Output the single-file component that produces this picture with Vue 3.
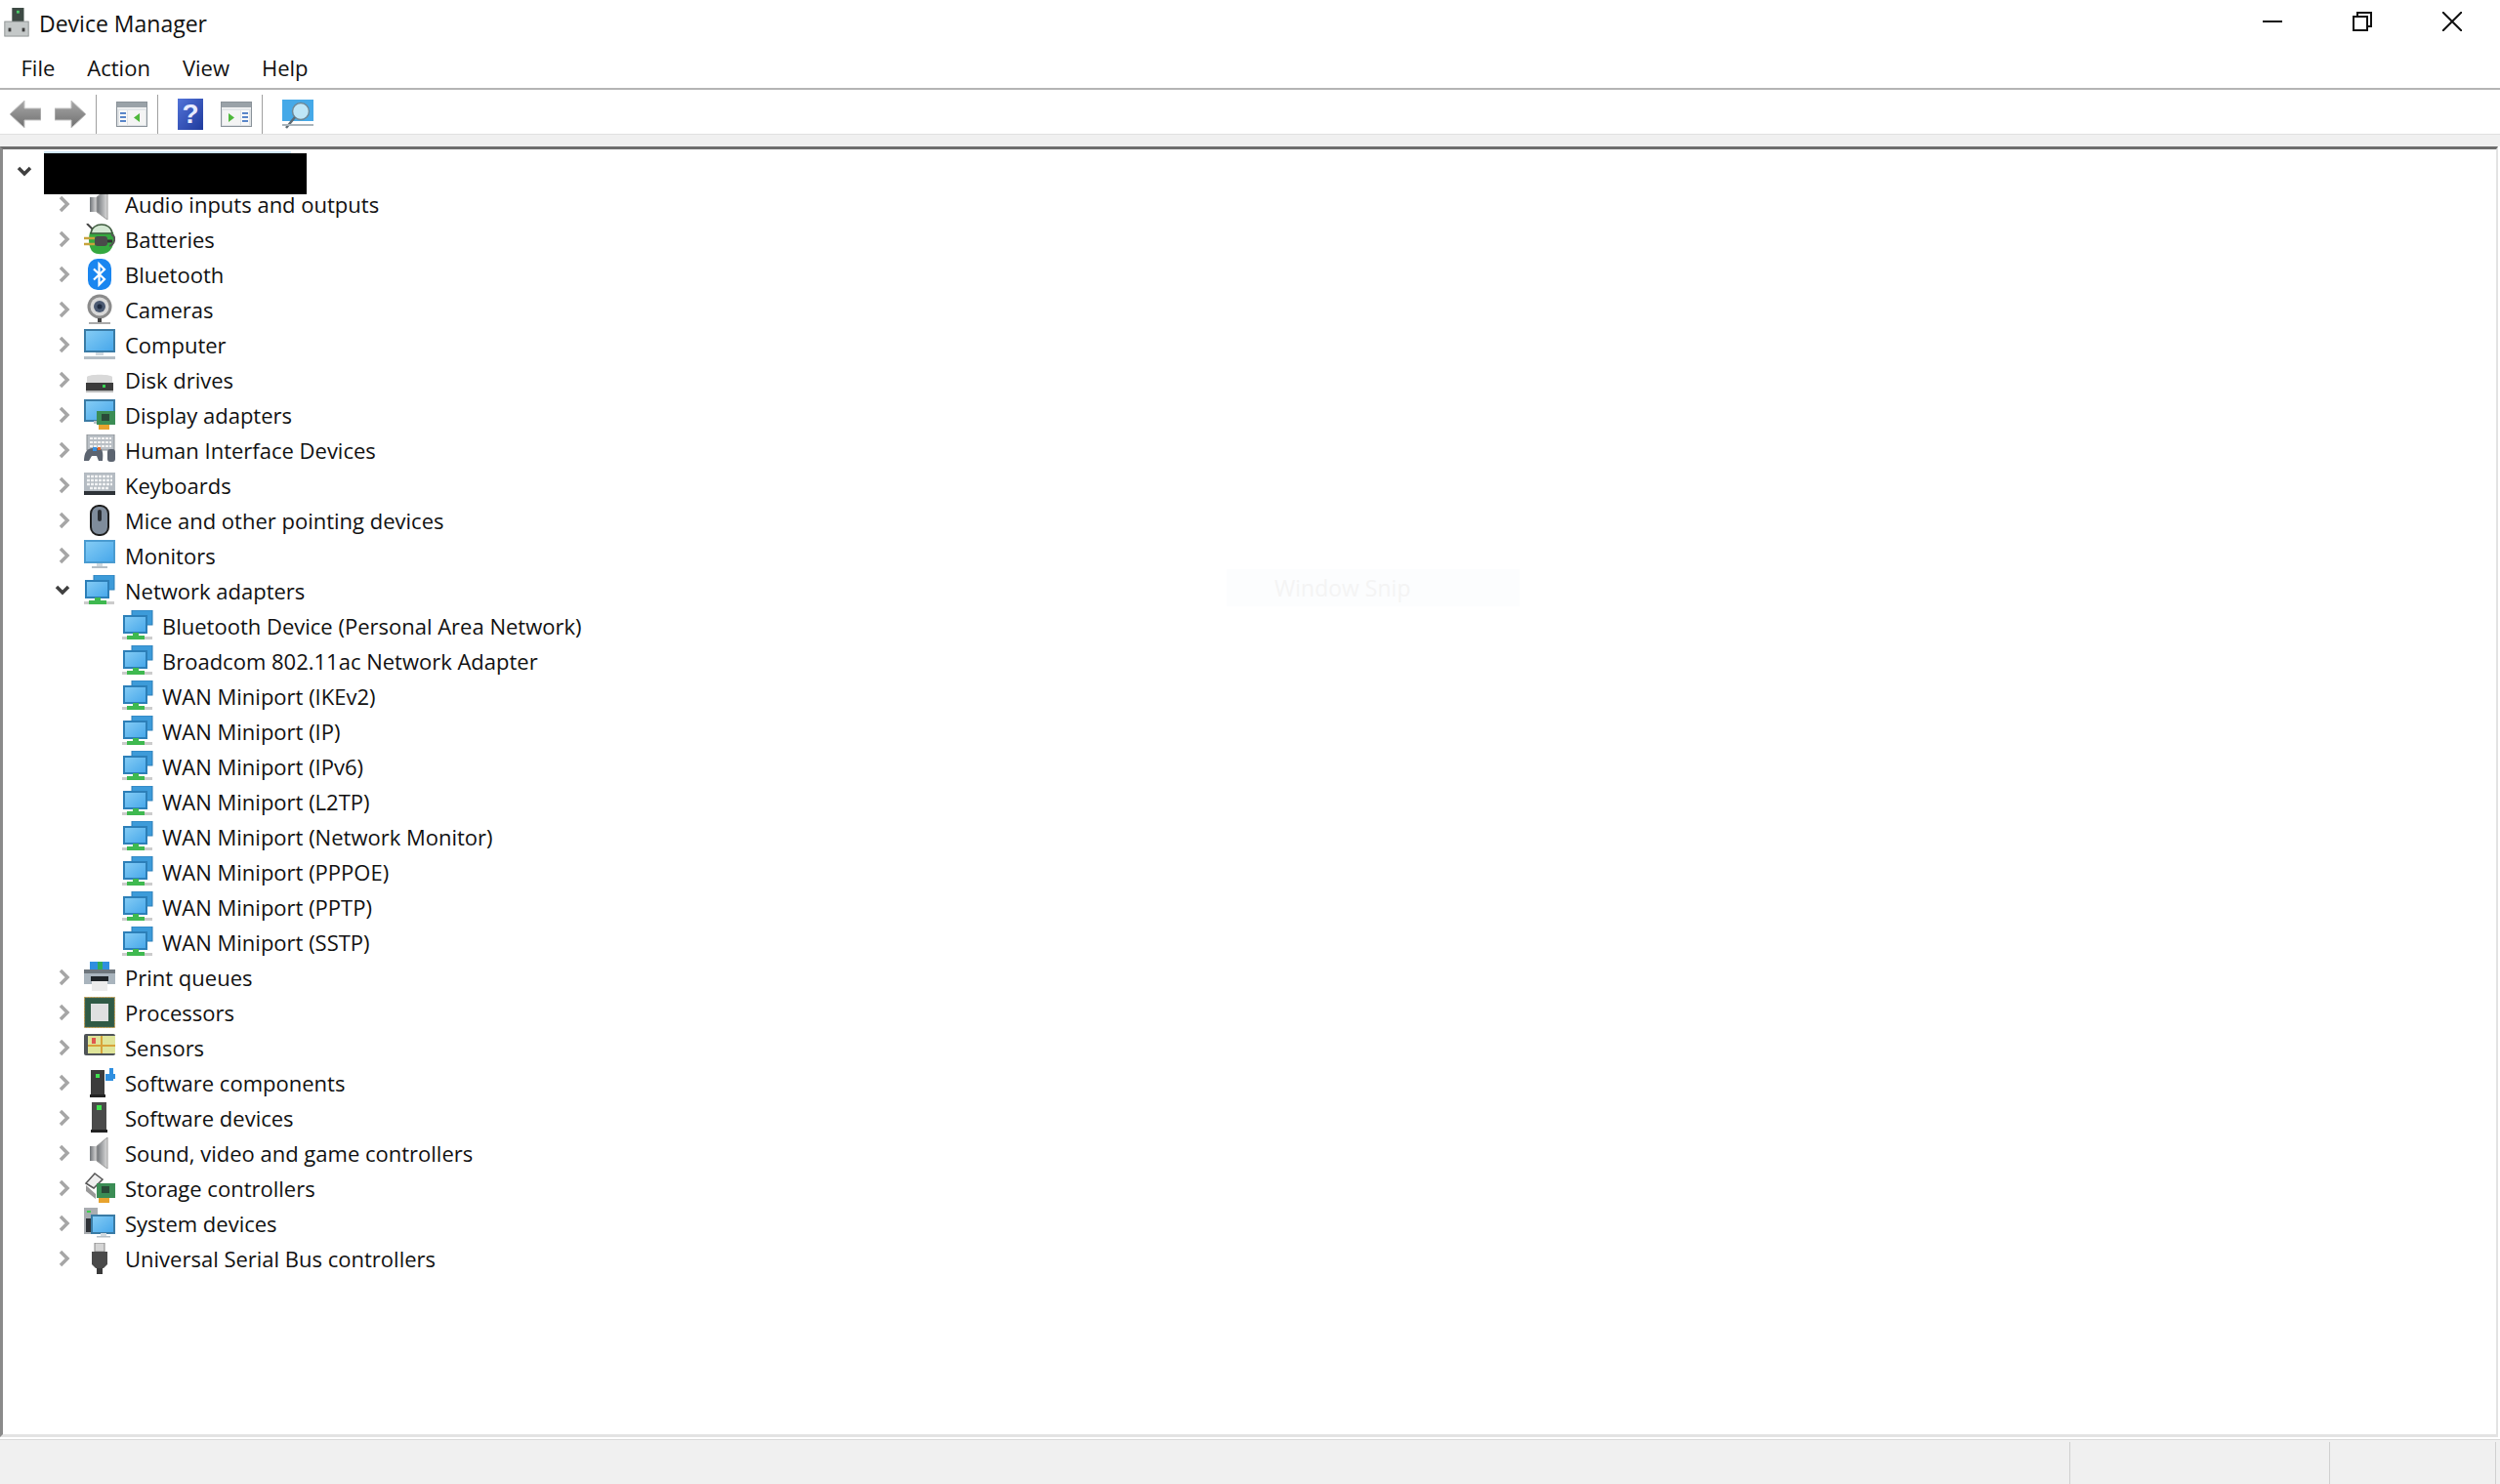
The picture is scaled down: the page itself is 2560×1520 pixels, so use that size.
<template>
  <div class="device-manager">
    <svg class="defs" width="0" height="0">
      <defs>
        <linearGradient id="screen" x1="0" y1="0" x2="1" y2="1">
          <stop offset="0" stop-color="#86cdf5" />
          <stop offset="1" stop-color="#45a6ea" />
        </linearGradient>
        <linearGradient id="steel" x1="0" y1="0" x2="1" y2="0">
          <stop offset="0" stop-color="#6f7377" />
          <stop offset="1" stop-color="#dcdcdc" />
        </linearGradient>
        <linearGradient id="arrow" x1="0" y1="0" x2="0" y2="1">
          <stop offset="0" stop-color="#a8a8a8" />
          <stop offset="1" stop-color="#6f6f6f" />
        </linearGradient>
        <linearGradient id="helpblue" x1="0" y1="0" x2="1" y2="1">
          <stop offset="0" stop-color="#5273d8" />
          <stop offset="1" stop-color="#1f3a9c" />
        </linearGradient>

        <symbol id="audio" viewBox="0 0 32 32">
          <rect x="6" y="9" width="7" height="15" fill="url(#steel)" />
          <path d="M13 9 24 0v32L13 24z" fill="url(#steel)" stroke="#9a9a9a" />
        </symbol>
        <symbol id="batteries" viewBox="0 0 32 32">
          <path d="M3 0l7 7" stroke="#444" stroke-width="2" fill="none" />
          <path d="M6 9h24c2 8 0 16-5 20-5 3-12 3-16 0-4-4-5-13-3-20z" fill="#35a83f" />
          <path d="M7 10c1-12 21-12 22 0z" fill="#d3e8d3" stroke="#3d5a3d" stroke-width="1.500" />
          <path d="M28 11c5 2 4 10-2 12" stroke="#555" stroke-width="2" fill="none" />
          <rect x="11" y="13" width="13" height="10" rx="3" fill="#4a4a4a" />
          <path d="M0 15h11M0 21h11" stroke="#c8a43c" stroke-width="2.500" />
          <path d="M24 18h5" stroke="#333" stroke-width="3" />
        </symbol>
        <symbol id="bluetooth" viewBox="0 0 32 32">
          <rect x="4" y="0" width="24" height="32" rx="10" fill="#1a86f0" />
          <path d="M10 10.500 21 21l-5.500 5.500V5.500L21 11 10 21.500" fill="none" stroke="#fff" stroke-width="2.200" />
        </symbol>
        <symbol id="camera" viewBox="0 0 32 32">
          <circle cx="16" cy="13" r="12.500" fill="#8b8b8b" />
          <circle cx="16" cy="13" r="9.500" fill="#d8d8d8" />
          <circle cx="16" cy="13" r="6" fill="#4b5a72" />
          <circle cx="16" cy="13" r="2.500" fill="#1d2a40" />
          <rect x="14" y="25" width="4" height="4" fill="#444" />
          <rect x="5" y="29" width="22" height="2" fill="#aaa" />
        </symbol>
        <symbol id="computer" viewBox="0 0 32 32">
          <rect x="1" y="1" width="30" height="22" fill="url(#screen)" stroke="#3a7ba5" stroke-width="2" />
          <rect x="12" y="24" width="8" height="3" fill="#cfd8de" />
          <rect x="0" y="28" width="32" height="3" fill="#b5bfc6" />
        </symbol>
        <symbol id="disk" viewBox="0 0 32 32">
          <path d="M3 13c2-3 24-3 26 0v6H3z" fill="#d9d9d9" />
          <rect x="2" y="19" width="28" height="8" fill="#3c3c3c" />
          <rect x="19" y="21" width="3" height="3" fill="#39d353" />
          <rect x="2" y="27" width="28" height="2" fill="#bdbdbd" />
        </symbol>
        <symbol id="display" viewBox="0 0 32 32">
          <rect x="1" y="1" width="30" height="21" fill="url(#screen)" stroke="#3a7ba5" stroke-width="2" />
          <rect x="10" y="22" width="8" height="3" fill="#b5bfc6" />
          <rect x="13" y="12" width="19" height="14" fill="#3b8d55" />
          <rect x="18" y="15" width="8" height="7" fill="#2a4a38" />
          <rect x="15" y="26" width="11" height="5" fill="#e8a32e" />
        </symbol>
        <symbol id="hid" viewBox="0 0 32 32">
          <rect x="3" y="0" width="28" height="16" fill="#b9bfc5" stroke="#8a8f94" />
          <path d="M6 4h22M6 8h22M6 12h22" stroke="#f2f2f2" stroke-width="2" stroke-dasharray="3 1" />
          <path d="M0 27c0-8 3-13 9-13h6c4 0 5 5 4 13h-4l-2-5H8l-3 5z" fill="#5c6470" />
          <rect x="9" y="13" width="4" height="4" fill="#3a90e0" />
          <rect x="14" y="13" width="3" height="3" fill="#e26a2c" />
          <rect x="24" y="15" width="8" height="13" rx="3" fill="#5c6470" />
        </symbol>
        <symbol id="keyboard" viewBox="0 0 32 32">
          <rect x="0" y="3" width="32" height="19" fill="#b4bbc2" />
          <path d="M3 7h26M3 11h26M3 15h26M6 19h20" stroke="#f2f3f4" stroke-width="2.400" stroke-dasharray="3 1" />
          <rect x="0" y="22" width="32" height="4" fill="#2e3338" />
        </symbol>
        <symbol id="mouse" viewBox="0 0 32 32">
          <rect x="7" y="1" width="18" height="30" rx="8" fill="#7f8c9b" stroke="#1e1e1e" stroke-width="2" />
          <rect x="14" y="5" width="4" height="12" rx="2" fill="#2b2f34" />
        </symbol>
        <symbol id="monitor" viewBox="0 0 32 32">
          <rect x="1" y="1" width="30" height="22" fill="url(#screen)" stroke="#4a9bd0" stroke-width="2" />
          <rect x="13" y="24" width="6" height="3" fill="#cfd8de" />
          <rect x="8" y="27" width="16" height="2" fill="#b5bfc6" />
        </symbol>
        <symbol id="network" viewBox="0 0 32 32">
          <rect x="10" y="0" width="21" height="15" fill="#3d9bd9" stroke="#2c7fb8" />
          <rect x="2" y="6" width="23" height="17" fill="url(#screen)" stroke="#2c7fb8" stroke-width="2" />
          <path d="M11 23h6v3h6v4H5v-4h6z" fill="#3fb950" />
          <path d="M0 27h5v3H0zM23 27h8v3h-8z" fill="#ccc" />
        </symbol>
        <symbol id="printer" viewBox="0 0 32 32">
          <rect x="6" y="0" width="20" height="8" fill="#2f8fe0" />
          <rect x="14" y="0" width="5" height="8" fill="#2fae5a" />
          <path d="M0 8h32v15H0z" fill="#a9b4bd" />
          <rect x="0" y="8" width="32" height="4" fill="#6e767d" />
          <rect x="7" y="15" width="18" height="5" fill="#1f2428" />
          <rect x="8" y="20" width="16" height="10" fill="#ececec" />
        </symbol>
        <symbol id="processor" viewBox="0 0 32 32">
          <rect x="0.500" y="0.500" width="31" height="31" fill="#3a5f4c" stroke="#c59a45" stroke-dasharray="2 1" />
          <rect x="2" y="2" width="28" height="28" fill="#2f5a45" />
          <rect x="7" y="7" width="18" height="18" fill="#dfe0e0" />
        </symbol>
        <symbol id="sensor" viewBox="0 0 32 32">
          <rect x="0" y="2" width="32" height="22" rx="2" fill="#4f5458" />
          <rect x="4" y="4" width="28" height="18" fill="#dfe59a" />
          <path d="M4 14h28M18 4v18" stroke="#d8a33a" stroke-width="2" />
          <rect x="8" y="6" width="4" height="6" fill="#e0584f" />
        </symbol>
        <symbol id="swcomp" viewBox="0 0 32 32">
          <rect x="7" y="3" width="14" height="25" fill="#3c3c3c" />
          <rect x="12" y="7" width="4" height="4" fill="#3fe04f" />
          <rect x="6" y="28" width="16" height="3" fill="#222" />
          <path d="M22 7h4V1h4v6h2v5h-2v2h-8z" fill="#2f8fe0" />
        </symbol>
        <symbol id="swdevice" viewBox="0 0 32 32">
          <rect x="8" y="0" width="15" height="28" fill="#4a4a4a" />
          <rect x="13" y="3" width="5" height="5" fill="#3fe04f" />
          <rect x="7" y="28" width="17" height="3" fill="#222" />
        </symbol>
        <symbol id="storage" viewBox="0 0 32 32">
          <path d="M2 11 11 1l8 6-9 9z" fill="#eee" stroke="#555" stroke-width="1.500" />
          <path d="M2 13v6l10 8v-5z" fill="#999" />
          <rect x="13" y="11" width="19" height="15" fill="#3b8d55" />
          <rect x="18" y="14" width="8" height="7" fill="#2a4a38" />
          <rect x="15" y="26" width="11" height="5" fill="#e8a32e" />
        </symbol>
        <symbol id="system" viewBox="0 0 32 32">
          <rect x="0" y="0" width="14" height="27" fill="#a9adb1" />
          <rect x="2" y="11" width="8" height="14" fill="#2f3338" />
          <rect x="3" y="3" width="4" height="2" fill="#3fd04f" />
          <rect x="8" y="8" width="23" height="18" fill="url(#screen)" stroke="#3a7ba5" stroke-width="2" />
          <rect x="17" y="26" width="6" height="3" fill="#cfd8de" />
          <rect x="13" y="29" width="14" height="1.500" fill="#b5bfc6" />
        </symbol>
        <symbol id="usb" viewBox="0 0 32 32">
          <rect x="11" y="0" width="10" height="9" fill="#d5d5d5" stroke="#888" />
          <path d="M8 9h16v13l-4 4h-8l-4-4z" fill="#4a4a4a" />
          <rect x="13" y="26" width="6" height="6" fill="#3a3a3a" />
        </symbol>
        <symbol id="panel" viewBox="0 0 32 26">
          <rect x="0.500" y="0.500" width="31" height="25" fill="#dfe3e6" stroke="#8a9299" />
          <rect x="1" y="1" width="30" height="5" fill="#9aa2a8" />
          <rect x="1" y="6" width="30" height="1.500" fill="#f4f4f4" />
          <rect x="3" y="9" width="8" height="15" fill="#f8f8f8" />
          <path d="M4 12h6M4 16h6M4 20h6" stroke="#5a86c9" stroke-width="2" />
          <rect x="12" y="9" width="18" height="15" fill="#f4f4f4" />
        </symbol>
      </defs>
    </svg>

    <div class="title-bar">
      <svg class="app-icon" viewBox="0 0 28 32">
        <rect x="9" y="0" width="13" height="15" fill="#3d4a44" />
        <rect x="14" y="3" width="3" height="3" fill="#4ccf6a" />
        <rect x="1" y="15" width="26" height="16" fill="#c4c8c8" stroke="#8e9292" />
        <rect x="5" y="22" width="3" height="4" fill="#3c3c3c" />
        <rect x="20" y="22" width="3" height="4" fill="#3c3c3c" />
      </svg>
      <span class="title">Device Manager</span>
      <div class="window-buttons">
        <button class="win-btn">
          <svg width="20" height="20" viewBox="0 0 20 20"><path d="M0 10h20" stroke="#111" stroke-width="2" /></svg>
        </button>
        <button class="win-btn">
          <svg width="20" height="20" viewBox="0 0 20 20" fill="none" stroke="#111" stroke-width="2"><rect x="1" y="5" width="14" height="14" /><path d="M5 5V1h14v14h-4" /></svg>
        </button>
        <button class="win-btn">
          <svg width="20" height="20" viewBox="0 0 20 20"><path d="M0 0 20 20M20 0 0 20" stroke="#111" stroke-width="2" /></svg>
        </button>
      </div>
    </div>

    <nav class="menu-bar">
      <span v-for="item in menus" :key="item" class="menu-item">{{ item }}</span>
    </nav>

    <div class="toolbar">
      <svg class="tool arrow-back" width="32" height="30" viewBox="0 0 32 30"><path d="M0 15 15 1v8h17v12H15v8z" fill="url(#arrow)" stroke="#c4c4c4" /></svg>
      <svg class="tool arrow-fwd" width="32" height="30" viewBox="0 0 32 30"><path d="M32 15 17 1v8H0v12h17v8z" fill="url(#arrow)" stroke="#c4c4c4" /></svg>
      <span class="tool-sep"></span>
      <svg class="tool" width="32" height="26" viewBox="0 0 32 26"><use href="#panel" /><path d="M24 12v9l-6-4.500z" fill="#4fb83c" /></svg>
      <span class="tool-sep"></span>
      <svg class="tool help" width="26" height="32" viewBox="0 0 26 32">
        <rect width="26" height="32" fill="url(#helpblue)" />
        <text x="13" y="25" text-anchor="middle" class="help-mark">?</text>
      </svg>
      <svg class="tool" width="32" height="26" viewBox="0 0 32 26"><use href="#panel" transform="matrix(-1 0 0 1 32 0)" /><path d="M8 12v9l6-4.500z" fill="#4fb83c" /></svg>
      <span class="tool-sep"></span>
      <svg class="tool" width="32" height="30" viewBox="0 0 32 30">
        <rect x="0" y="0" width="32" height="22" fill="#45a9e8" />
        <circle cx="19" cy="12" r="8.500" fill="#bfe6f7" stroke="#6f8896" stroke-width="1.500" />
        <path d="M13 18 4 29" stroke="#5d6a73" stroke-width="2.500" />
        <rect x="0" y="25" width="32" height="2" fill="#aab4bb" />
      </svg>
    </div>

    <div class="toolbar-gap"></div>

    <div class="tree-panel">
      <div class="row root">
        <svg class="chevron open" viewBox="0 0 16 12"><path d="M2 2l6 6 6-6" /></svg>
        <div class="selection"></div>
        <div class="redacted"></div>
      </div>
      <template v-for="cat in categories" :key="cat.name">
        <div class="row category">
          <svg v-if="cat.children" class="chevron open" viewBox="0 0 16 12"><path d="M2 2l6 6 6-6" /></svg>
          <svg v-else class="chevron" viewBox="0 0 14 18"><path d="M3 2l7 7-7 7" /></svg>
          <svg class="icon"><use :href="'#' + cat.icon" /></svg>
          <span class="label">{{ cat.name }}</span>
        </div>
        <div v-for="child in cat.children" :key="child" class="row device">
          <svg class="icon"><use :href="'#' + cat.icon" /></svg>
          <span class="label">{{ child }}</span>
        </div>
      </template>
      <div class="snip-hint"><span>Window Snip</span></div>
    </div>

    <footer class="status-bar">
      <div class="status-cell main"></div>
      <div class="status-cell middle"></div>
      <div class="status-cell end"></div>
    </footer>
  </div>
</template>

<script setup>
const menus = ['File', 'Action', 'View', 'Help']

const categories = [
  { name: 'Audio inputs and outputs', icon: 'audio' },
  { name: 'Batteries', icon: 'batteries' },
  { name: 'Bluetooth', icon: 'bluetooth' },
  { name: 'Cameras', icon: 'camera' },
  { name: 'Computer', icon: 'computer' },
  { name: 'Disk drives', icon: 'disk' },
  { name: 'Display adapters', icon: 'display' },
  { name: 'Human Interface Devices', icon: 'hid' },
  { name: 'Keyboards', icon: 'keyboard' },
  { name: 'Mice and other pointing devices', icon: 'mouse' },
  { name: 'Monitors', icon: 'monitor' },
  {
    name: 'Network adapters',
    icon: 'network',
    children: [
      'Bluetooth Device (Personal Area Network)',
      'Broadcom 802.11ac Network Adapter',
      'WAN Miniport (IKEv2)',
      'WAN Miniport (IP)',
      'WAN Miniport (IPv6)',
      'WAN Miniport (L2TP)',
      'WAN Miniport (Network Monitor)',
      'WAN Miniport (PPPOE)',
      'WAN Miniport (PPTP)',
      'WAN Miniport (SSTP)'
    ]
  },
  { name: 'Print queues', icon: 'printer' },
  { name: 'Processors', icon: 'processor' },
  { name: 'Sensors', icon: 'sensor' },
  { name: 'Software components', icon: 'swcomp' },
  { name: 'Software devices', icon: 'swdevice' },
  { name: 'Sound, video and game controllers', icon: 'audio' },
  { name: 'Storage controllers', icon: 'storage' },
  { name: 'System devices', icon: 'system' },
  { name: 'Universal Serial Bus controllers', icon: 'usb' }
]
</script>

<style>
html,
body {
  margin: 0;
  background: #fff;
}
</style>

<style scoped>
.device-manager {
  width: 2560px;
  height: 1520px;
  display: flex;
  flex-direction: column;
  background: #fff;
  color: #111;
  font-family: 'Open Sans', 'Noto Sans', sans-serif;
  font-size: 22px;
  overflow: hidden;
}

.defs {
  position: absolute;
}

.title-bar {
  height: 44px;
  display: flex;
  align-items: center;
  padding-left: 3px;
  flex-shrink: 0;
}

.app-icon {
  width: 28px;
  height: 30px;
  margin-top: 2px;
  margin-right: 9px;
  flex-shrink: 0;
}

.title {
  font-size: 23px;
  margin-top: 4px;
}

.window-buttons {
  margin-left: auto;
  margin-right: 3px;
  display: flex;
  height: 44px;
  align-items: flex-start;
}

.win-btn {
  width: 92px;
  height: 44px;
  border: none;
  background: none;
  padding: 12px 0 0;
  display: flex;
  justify-content: center;
  align-items: flex-start;
}

.menu-bar {
  height: 48px;
  box-sizing: border-box;
  display: flex;
  align-items: center;
  padding: 4px 0 0 5px;
  border-bottom: 2px solid #b4b4b4;
  flex-shrink: 0;
}

.menu-item {
  padding: 0 16.500px;
}

.toolbar {
  height: 46px;
  box-sizing: border-box;
  display: flex;
  align-items: center;
  padding: 4px 0 0 10px;
  border-bottom: 1px solid #e0e0e0;
  flex-shrink: 0;
}

.tool {
  flex-shrink: 0;
}

.arrow-fwd {
  margin-left: 14px;
}

.tool-sep {
  width: 1px;
  height: 40px;
  background: #a0a0a0;
  margin: 0 20px 0 10px;
}

.help {
  margin-right: 18px;
}

.help-mark {
  font-family: 'Liberation Sans', sans-serif;
  font-size: 28px;
  font-weight: 700;
  fill: #e8ecff;
}

.toolbar-gap {
  height: 12px;
  background: #f0f0f0;
  flex-shrink: 0;
}

.tree-panel {
  position: relative;
  flex: 1;
  box-sizing: border-box;
  padding-top: 2px;
  border-top: 3px solid #6d6d6d;
  border-left: 3px solid #8a8a8a;
  border-right: 2px solid #e3e3e3;
  border-bottom: 3px solid #e3e3e3;
  margin-right: 2px;
}

.row {
  height: 36px;
  display: flex;
  align-items: center;
  white-space: nowrap;
}

.root {
  position: relative;
  padding-left: 17px;
}

.root .chevron {
  margin-top: 6px;
}

.selection {
  position: absolute;
  left: 42px;
  top: 0;
  width: 253px;
  height: 2px;
  background: #cfe6f7;
}

.redacted {
  position: absolute;
  left: 42px;
  top: 2px;
  width: 269px;
  height: 42px;
  background: #000;
  z-index: 1;
}

.category {
  padding-left: 56px;
}

.device {
  padding-left: 122px;
}

.device .icon {
  margin-right: 9px;
}

.chevron {
  width: 14px;
  height: 18px;
  fill: none;
  stroke: #a6a6a6;
  stroke-width: 3.500;
  margin-right: 13px;
  flex-shrink: 0;
}

.chevron.open {
  width: 16px;
  height: 12px;
  margin-left: -3px;
  margin-right: 14px;
  stroke: #404040;
}

.icon {
  width: 32px;
  height: 32px;
  flex-shrink: 0;
  margin-right: 10px;
}

.snip-hint {
  position: absolute;
  left: 1253px;
  top: 430px;
  width: 300px;
  height: 38px;
  background: #fcfdfe;
  color: #f4f4f4;
  font-size: 23px;
  display: flex;
  align-items: center;
  padding-left: 49px;
  box-sizing: border-box;
}

.status-bar {
  height: 46px;
  margin-top: 2px;
  display: flex;
  background: #f0f0f0;
  border-top: 1px solid #d9d9d9;
  flex-shrink: 0;
  box-sizing: border-box;
}

.status-cell {
  box-sizing: border-box;
  border-right: 1px solid #d0d0d0;
  margin-top: 2px;
}

.main {
  width: 2120px;
}

.middle {
  width: 266px;
}

.end {
  width: 170px;
}
</style>
